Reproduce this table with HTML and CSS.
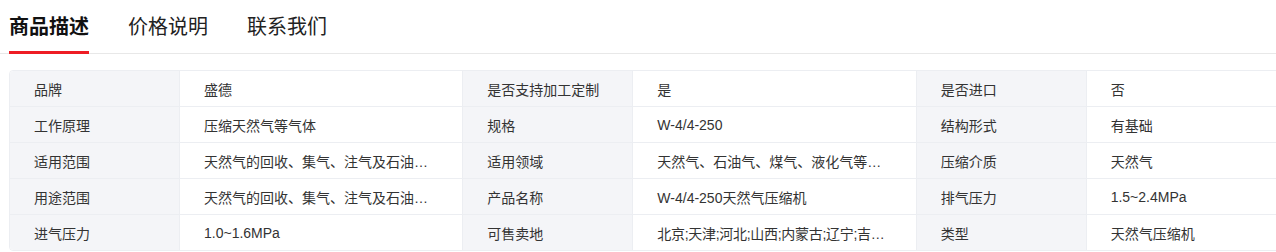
FILE: index.html
```html
<!DOCTYPE html>
<html lang="zh-CN">
<head>
<meta charset="utf-8">
<link rel="stylesheet" href="styles.css">
</head>
<body>
<div class="page">
  <div class="tabs">
    <div class="tab active">商品描述</div>
    <div class="tab">价格说明</div>
    <div class="tab">联系我们</div>
  </div>
  <div class="table-wrap">
    <table class="attrs">
      <colgroup>
        <col class="c-label"><col class="c-value"><col class="c-label"><col class="c-value"><col class="c-label"><col class="c-value">
      </colgroup>
      <tr>
        <td class="label">品牌</td><td class="value">盛德</td>
        <td class="label">是否支持加工定制</td><td class="value">是</td>
        <td class="label">是否进口</td><td class="value">否</td>
      </tr>
      <tr>
        <td class="label">工作原理</td><td class="value">压缩天然气等气体</td>
        <td class="label">规格</td><td class="value">W-4/4-250</td>
        <td class="label">结构形式</td><td class="value">有基础</td>
      </tr>
      <tr>
        <td class="label">适用范围</td><td class="value" title="天然气的回收、集气、注气及石油气增压">天然气的回收、集气、注气及石油…</td>
        <td class="label">适用领域</td><td class="value" title="天然气、石油气、煤气、液化气等气体">天然气、石油气、煤气、液化气等…</td>
        <td class="label">压缩介质</td><td class="value">天然气</td>
      </tr>
      <tr>
        <td class="label">用途范围</td><td class="value" title="天然气的回收、集气、注气及石油气增压">天然气的回收、集气、注气及石油…</td>
        <td class="label">产品名称</td><td class="value">W-4/4-250天然气压缩机</td>
        <td class="label">排气压力</td><td class="value">1.5~2.4MPa</td>
      </tr>
      <tr>
        <td class="label">进气压力</td><td class="value">1.0~1.6MPa</td>
        <td class="label">可售卖地</td><td class="value" title="北京;天津;河北;山西;内蒙古;辽宁;吉林;黑龙江"><span class="tight">北京;天津;河北;山西;内蒙古;辽宁;吉…</span></td>
        <td class="label">类型</td><td class="value">天然气压缩机</td>
      </tr>
    </table>
  </div>
</div>
</body>
</html>
```
FILE: styles.css
```css
* { box-sizing: border-box; }
html, body { margin: 0; padding: 0; background: #fff; }
body {
  font-family: "Liberation Sans", Arial, "Noto Sans CJK SC", sans-serif;
  color: #333;
  overflow: hidden;
}
.page {
  width: 1276px;
  overflow: hidden;
}
.tabs {
  display: flex;
  gap: 39px;
  padding-left: 9px;
  border-bottom: 1px solid #e8e8e8;
}
.tab {
  height: 54px;
  padding-top: 15px;
  line-height: 24px;
  font-size: 20px;
  color: #222;
  border-bottom: 3px solid transparent;
  margin-bottom: -1px;
}
.tab.active {
  font-weight: bold;
  color: #111;
  border-bottom-color: #ee1c24;
}
.table-wrap {
  margin-top: 16px;
  margin-left: 9px;
  width: 1360px;
}
.attrs {
  width: 1360px;
  table-layout: fixed;
  border-collapse: separate;
  border-spacing: 0;
  border: 1px solid #eceef2;
  border-radius: 4px;
  font-size: 14px;
}
.c-label { width: 170px; }
.c-value { width: 283.33px; }
.attrs td {
  height: 36px;
  padding: 0 10px 0 24px;
  border-bottom: 1px solid #eceef2;
  border-right: 1px solid #eceef2;
  white-space: nowrap;
  vertical-align: middle;
}
.attrs tr:last-child td { border-bottom: none; height: 35px; }
.attrs td:last-child { border-right: none; }
.attrs td.label {
  background: #f4f5f8;
  color: #333;
}
.attrs td.value { background: #fff; color: #333; }
.attrs tr:first-child td.label:first-child { border-top-left-radius: 4px; }
.attrs tr:last-child td.label:first-child { border-bottom-left-radius: 4px; }
.tight { letter-spacing: -0.3px; }
```
